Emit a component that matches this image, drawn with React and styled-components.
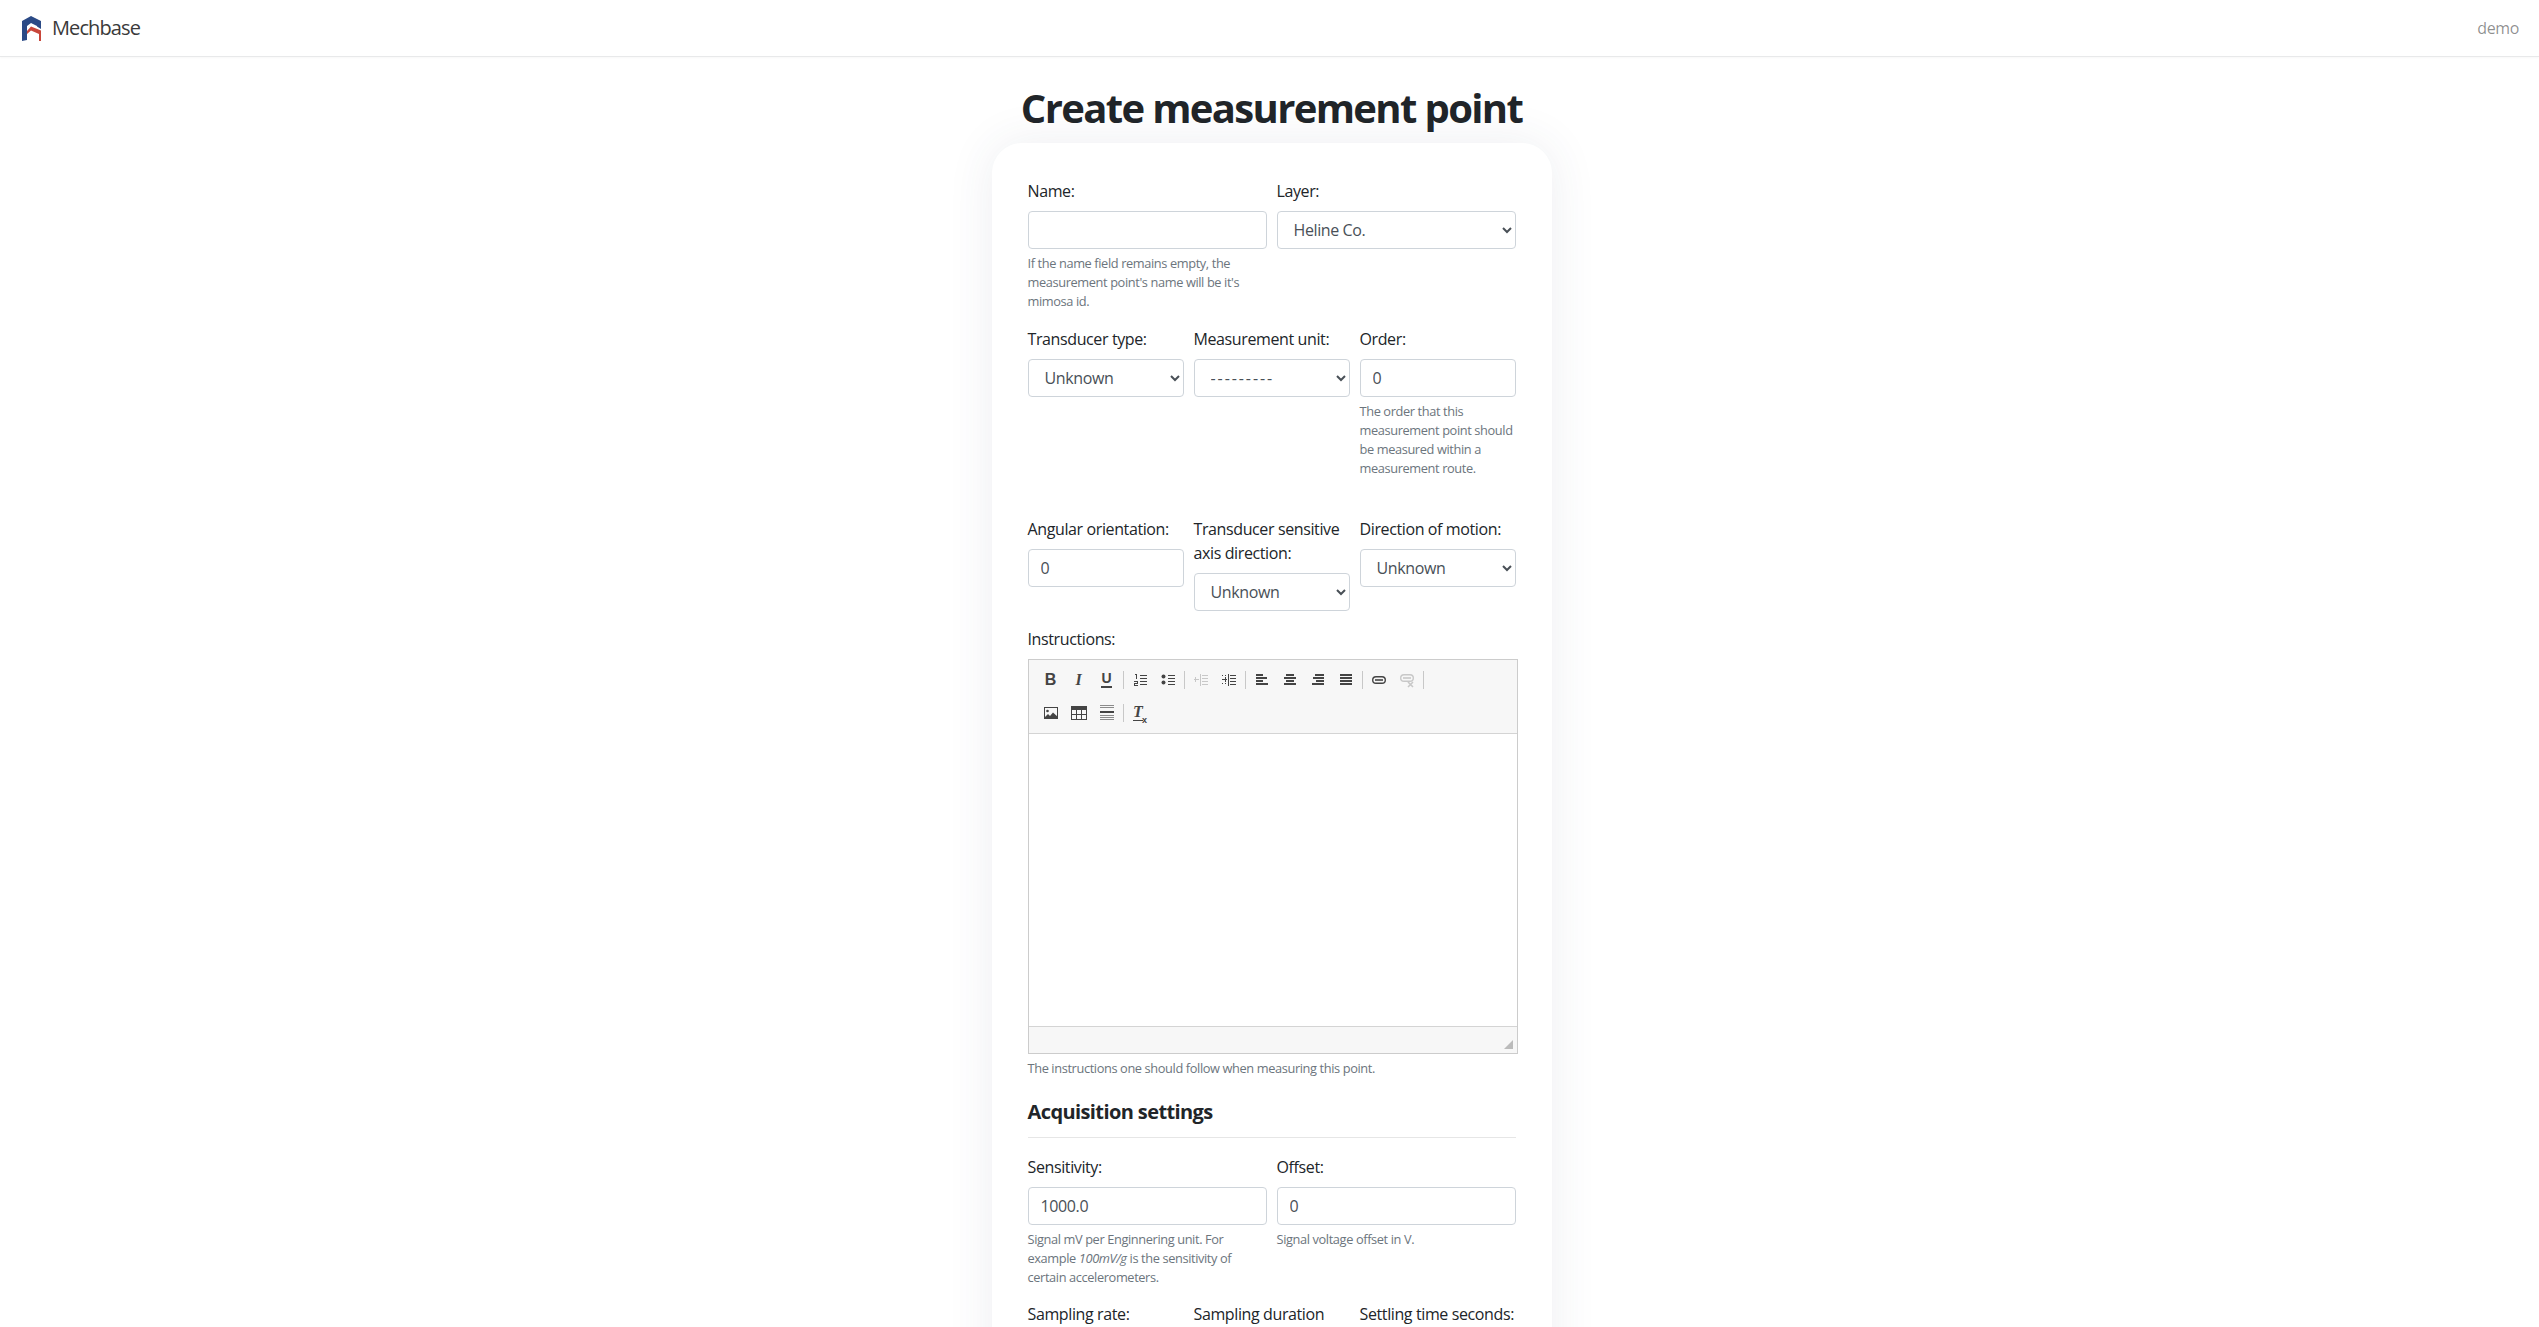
import React from 'react'
import styled, { createGlobalStyle } from 'styled-components'

const Global = createGlobalStyle`
  html, body { margin: 0; padding: 0; background: #fff; }
  body {
    font-family: "Open Sans", "Noto Sans", sans-serif;
    font-size: 16px;
    line-height: 1.5;
    color: #212529;
    letter-spacing: -0.024em;
  }
  * { box-sizing: border-box; }
`

const Page = styled.div`
  height: 1327px;
  overflow: hidden;
`

const Navbar = styled.nav`
  height: 57px;
  display: flex;
  align-items: center;
  justify-content: space-between;
  padding: 0 20px 0 22px;
  border-bottom: 1px solid #e8e9ea;
  box-shadow: 0 1px 2px rgba(0, 0, 0, 0.03);
`

const Brand = styled.a`
  display: flex;
  align-items: center;
  gap: 11px;
  font-size: 20px;
  letter-spacing: -0.045em;
  color: #3a3a3a;
`

const UserLink = styled.a`
  font-size: 16px;
  color: rgba(0, 0, 0, 0.45);
`

const Main = styled.main`
  display: flex;
  flex-direction: column;
  align-items: center;
  padding-left: 4px;
`

const Title = styled.h1`
  margin: 27px 0 11px;
  font-size: 40px;
  line-height: 48px;
  font-weight: 700;
  color: #212529;
  letter-spacing: -0.041em;
`

const Card = styled.form`
  width: 560px;
  padding: 36px;
  background: #fff;
  border-radius: 30px;
  box-shadow: 0 0 48px rgba(50, 70, 100, 0.09);
`

const Row = styled.div`
  display: grid;
  grid-template-columns: repeat(${p => p.$cols}, minmax(0, 1fr));
  column-gap: 10px;
  margin-bottom: ${p => p.$gap || 16}px;
`

const Label = styled.label`
  display: block;
  margin-bottom: 8px;
  white-space: ${p => (p.$wrap ? 'normal' : 'nowrap')};
`

const Input = styled.input`
  display: block;
  width: 100%;
  height: 38px;
  padding: 6px 12px;
  font: inherit;
  letter-spacing: inherit;
  color: #495057;
  background: #fff;
  border: 1px solid #ced4da;
  border-radius: 4px;
`

const Select = styled.select`
  display: block;
  width: 100%;
  height: 38px;
  padding: 6px 12px;
  font: inherit;
  letter-spacing: ${p => (p.$spaced ? '0.12em' : 'inherit')};
  color: #495057;
  background: #fff;
  border: 1px solid #ced4da;
  border-radius: 4px;
`

const Help = styled.small`
  display: block;
  margin: 5px 0 -1px;
  font-size: 12.8px;
  line-height: 19.2px;
  color: #6c757d;
`

const Field = ({ label, value, help, wrap, options, spaced }) => (
  <div>
    <Label $wrap={wrap}>{label}</Label>
    {options ? (
      <Select defaultValue={options[0]} $spaced={spaced}>
        {options.map(o => <option key={o}>{o}</option>)}
      </Select>
    ) : (
      <Input type="text" defaultValue={value} />
    )}
    {help && <Help>{help}</Help>}
  </div>
)

const Editor = styled.div`
  width: 490px;
  border: 1px solid #ccc;
  background: #f7f7f7;
`

const Toolbar = styled.div`
  height: 74px;
  padding: 3px 0 0 8px;
  border-bottom: 1px solid #d4d4d4;
`

const ToolRow = styled.div`
  display: flex;
  align-items: center;
  height: 33px;
`

const Tool = styled.span`
  width: 28px;
  height: 33px;
  display: flex;
  align-items: center;
  justify-content: center;
  color: ${p => (p.$off ? '#c8c8c8' : '#444')};
`

const Sep = styled.span`
  width: 1px;
  height: 18px;
  margin: 0 2px;
  background: #c8c8c8;
`

const GlyphB = styled.span`
  font: 700 16px/1 "Liberation Sans", sans-serif;
  letter-spacing: 0;
`

const GlyphI = styled.span`
  font: italic 700 16px/1 "Liberation Serif", serif;
  letter-spacing: 0;
`

const GlyphU = styled.span`
  font: 700 14px/1 "Liberation Sans", sans-serif;
  letter-spacing: 0;
  padding-bottom: 1px;
  border-bottom: 2px solid currentColor;
`

const GlyphClear = styled.span`
  font: italic 700 16px/1 "Liberation Serif", serif;
  letter-spacing: 0;
  border-bottom: 1px solid currentColor;
  margin-right: 3px;
  position: relative;
`

const GlyphClearX = styled.span`
  position: absolute;
  left: 9px;
  bottom: -5px;
  font: 700 9px/1 "Liberation Sans", sans-serif;
`

const EditArea = styled.div`
  height: 292px;
  background: #fff;
`

const StatusBar = styled.div`
  position: relative;
  height: 27px;
  border-top: 1px solid #d4d4d4;
`

const Grip = styled.svg`
  position: absolute;
  right: 4px;
  bottom: 4px;
`

const SectionTitle = styled.h5`
  margin: 0;
  padding: 22px 0 8px;
  font-size: 20px;
  line-height: 24px;
  font-weight: 700;
  letter-spacing: -0.03em;
  color: #212529;
`

const Rule = styled.hr`
  margin: 5px 0 17px;
  border: 0;
  border-top: 1px solid #e6e6e6;
`

const Icon = ({ children }) => (
  <svg width="16" height="16" viewBox="0 0 16 16" fill="currentColor" shapeRendering="crispEdges">{children}</svg>
)

// alignment icons: four 2px bars on a 3px pitch
const Bars = ({ items }) => (
  <Icon>
    {items.map(([x, w], i) => <rect key={i} x={x} y={2 + i * 3} width={w} height="2" />)}
  </Icon>
)

const ListLines = () => (
  <>
    <rect x="8" y="3" width="7" height="1" /><rect x="8" y="6" width="7" height="1" />
    <rect x="8" y="9" width="7" height="1" /><rect x="8" y="12" width="7" height="1" />
  </>
)

const IndentLines = () => (
  <>
    <rect x="7" y="2" width="1" height="12" />
    <rect x="9" y="3" width="6" height="1" /><rect x="9" y="6" width="6" height="1" />
    <rect x="9" y="9" width="6" height="1" /><rect x="9" y="12" width="6" height="1" />
  </>
)

const Logo = () => (
  <svg width="19" height="25" viewBox="0 0 19 25">
    <path d="M0 5 L9 0 L19 5 V13 L15 10.5 V10 L9 7 L5 10 V24 L0 25 Z" fill="#2b4a86" />
    <path d="M5 15 L9 10.5 L19 14.5 V25 H17 V18 L9 14.5 L5 18 Z" fill="#c8463a" />
  </svg>
)

const App = () => (
  <Page>
    <Global />
    <Navbar>
      <Brand><Logo />Mechbase</Brand>
      <UserLink>demo</UserLink>
    </Navbar>
    <Main>
      <Title>Create measurement point</Title>
      <Card>
        <Row $cols={2}>
          <Field label="Name:" value="" help="If the name field remains empty, the measurement point's name will be it's mimosa id." />
          <Field label="Layer:" options={['Heline Co.']} />
        </Row>
        <Row $cols={3} $gap={40}>
          <Field label="Transducer type:" options={['Unknown']} />
          <Field label="Measurement unit:" options={['---------']} spaced />
          <Field label="Order:" value="0" help="The order that this measurement point should be measured within a measurement route." />
        </Row>
        <Row $cols={3}>
          <Field label="Angular orientation:" value="0" />
          <Field label="Transducer sensitive axis direction:" wrap options={['Unknown']} />
          <Field label="Direction of motion:" options={['Unknown']} />
        </Row>

        <Label>Instructions:</Label>
        <Editor>
          <Toolbar>
            <ToolRow>
              <Tool><GlyphB>B</GlyphB></Tool>
              <Tool><GlyphI>I</GlyphI></Tool>
              <Tool><GlyphU>U</GlyphU></Tool>
              <Sep />
              <Tool>
                <Icon>
                  <ListLines />
                  <rect x="4" y="2" width="1" height="5" /><rect x="3" y="2" width="1" height="1" />
                  <rect x="2" y="9" width="4" height="1" /><rect x="5" y="10" width="1" height="1" />
                  <rect x="2" y="11" width="4" height="1" /><rect x="2" y="12" width="1" height="1" />
                  <rect x="2" y="13" width="4" height="1" />
                </Icon>
              </Tool>
              <Tool>
                <Icon>
                  <circle cx="3.5" cy="4.5" r="2" shapeRendering="auto" />
                  <circle cx="3.5" cy="10.5" r="2" shapeRendering="auto" />
                  <ListLines />
                </Icon>
              </Tool>
              <Sep />
              <Tool $off>
                <Icon>
                  <IndentLines />
                  <rect x="1" y="7" width="5" height="1" /><rect x="2" y="5" width="1" height="5" />
                </Icon>
              </Tool>
              <Tool>
                <Icon>
                  <IndentLines />
                  <rect x="1" y="7" width="5" height="1" /><rect x="4" y="5" width="1" height="5" />
                  <rect x="1" y="3" width="1" height="1" /><rect x="4" y="3" width="1" height="1" />
                  <rect x="1" y="11" width="1" height="1" /><rect x="4" y="11" width="1" height="1" />
                </Icon>
              </Tool>
              <Sep />
              <Tool><Bars items={[[2, 7], [2, 11], [2, 7], [2, 12]]} /></Tool>
              <Tool><Bars items={[[4, 8], [2, 12], [4, 8], [2, 12]]} /></Tool>
              <Tool><Bars items={[[5, 9], [3, 11], [6, 8], [2, 12]]} /></Tool>
              <Tool><Bars items={[[2, 12], [2, 12], [2, 12], [2, 12]]} /></Tool>
              <Sep />
              <Tool>
                <svg width="16" height="16" viewBox="0 0 16 16" fill="currentColor">
                  <rect x="1.7" y="4.7" width="12.6" height="6.6" rx="3.3" fill="none" stroke="currentColor" strokeWidth="1.4" />
                  <rect x="4" y="7.2" width="8" height="1.6" />
                </svg>
              </Tool>
              <Tool $off>
                <svg width="16" height="16" viewBox="0 0 16 16" fill="currentColor">
                  <rect x="1.7" y="2.7" width="12.6" height="6.6" rx="3.3" fill="none" stroke="currentColor" strokeWidth="1.4" />
                  <rect x="4" y="5.2" width="8" height="1.6" />
                  <path d="M9 10 L14 15 M14 10 L9 15" stroke="currentColor" strokeWidth="1.6" />
                </svg>
              </Tool>
              <Sep />
            </ToolRow>
            <ToolRow>
              <Tool>
                <svg width="16" height="16" viewBox="0 0 16 16" fill="currentColor">
                  <rect x="1.5" y="2.5" width="13" height="11" fill="none" stroke="currentColor" />
                  <circle cx="4.5" cy="6" r="1.3" />
                  <path d="M1 13 L5 9 L7 11 L10 7.5 L15 12 V13.5 H1 Z" />
                </svg>
              </Tool>
              <Tool>
                <Icon>
                  <rect x="0" y="1" width="16" height="4" />
                  <path d="M0.5 1 V14.5 H15.5 V1 M5.5 4 V14 M10.5 4 V14 M1 9.5 H15" stroke="currentColor" fill="none" />
                </Icon>
              </Tool>
              <Tool>
                <Icon>
                  <g opacity="0.6">
                    <rect x="1" y="0" width="14" height="1" /><rect x="1" y="2" width="14" height="1" />
                    <rect x="1" y="10" width="14" height="1" /><rect x="1" y="12" width="14" height="1" /><rect x="1" y="14" width="14" height="1" />
                  </g>
                  <rect x="1" y="6" width="14" height="2" />
                </Icon>
              </Tool>
              <Sep />
              <Tool><GlyphClear>T<GlyphClearX>x</GlyphClearX></GlyphClear></Tool>
            </ToolRow>
          </Toolbar>
          <EditArea />
          <StatusBar>
            <Grip width="9" height="9" viewBox="0 0 9 9"><path d="M9 0 V9 H0 Z" fill="#bbb" /></Grip>
          </StatusBar>
        </Editor>
        <Help>The instructions one should follow when measuring this point.</Help>

        <SectionTitle>Acquisition settings</SectionTitle>
        <Rule />
        <Row $cols={2}>
          <Field label="Sensitivity:" value="1000.0" help={<>Signal mV per Enginnering unit. For example <em>100mV/g</em> is the sensitivity of certain accelerometers.</>} />
          <Field label="Offset:" value="0" help="Signal voltage offset in V." />
        </Row>
        <Row $cols={3}>
          <Field label="Sampling rate:" value="25600" />
          <Field label="Sampling duration (seconds):" wrap value="1" />
          <Field label="Settling time seconds:" value="0" />
        </Row>
      </Card>
    </Main>
  </Page>
)

export default App
